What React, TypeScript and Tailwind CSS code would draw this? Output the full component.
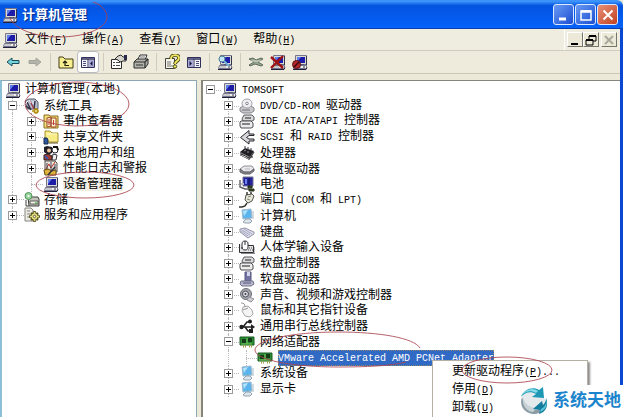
import type { ReactNode } from 'react';
import clsx from 'clsx';

function Svg({ children, className }: { children: ReactNode; className?: string }) {
  return (
    <svg
      viewBox="0 0 16 16"
      className={clsx('size-4 shrink-0', className)}
      fill="none"
      aria-hidden="true"
    >
      {children}
    </svg>
  );
}

function PcShape() {
  return (
    <>
      <path d="M3.5 1.500h11v9h-11z" fill="#dcdcd4" stroke="#74748c" />
      <path d="M5 3h8v6H5z" fill="#1c1ca8" />
      <path d="M5 3h4L5 8z" fill="#6080ec" />
      <path d="M14.500 2v9" stroke="#34344c" />
      <path d="M7 10.500h5v1H7z" fill="#34344c" />
      <path d="M2.500 11.500h12v2l-1 1h-12z" fill="#f0f0e8" stroke="#74748c" />
      <path d="M3 13h6" stroke="#a4a4b0" />
      <path d="M11 13h2" stroke="#34344c" />
      <path d="M1 15.500h13l1-2" stroke="#20203c" />
    </>
  );
}

const PcIcon = () => (
  <Svg>
    <PcShape />
  </Svg>
);

const ToolsIcon = () => (
  <Svg>
    <path d="M1 3l4-2h6l3 3v7H3z" fill="#b4bcd0" stroke="#5c5c68" />
    <path d="M3 4l4 8M11 3l-1 8M2 8l4 3" stroke="#303040" strokeWidth="1.4" />
    <path d="M6 3l4 8" stroke="#a43c44" strokeWidth="1.4" />
    <path d="M1 6l3-3M5 2l2 3M9 3v3" stroke="#f4f4f4" />
    <path d="M8 13h7M12 10v6M10 11l4 4M14 11l-4 4" stroke="#b08c10" strokeWidth="1.500" />
    <circle cx="12" cy="13" r="1" fill="#f4e890" />
  </Svg>
);

const EventIcon = () => (
  <Svg>
    <path d="M1 2h5l1 1h8v12H1z" fill="#f0dc78" stroke="#8c6c20" />
    <path d="M4 5l4-1v9l-4 1zM8 5h5v9H8z" fill="#fff4d0" stroke="#9c4424" />
    <path d="M6 6v6M10.500 7v5" stroke="#c43c2c" />
  </Svg>
);

const SharedFolderIcon = () => (
  <Svg>
    <path d="M2 2h5l2 2h6v9H2z" fill="#f8ec88" stroke="#a89028" />
    <path d="M4 5h10" stroke="#fffccc" />
    <path d="M1 9h3l1 2v4H1z" fill="#2c58a4" stroke="#14284c" />
    <path d="M6 14h9" stroke="#5c5020" />
  </Svg>
);

const UsersIcon = () => (
  <Svg>
    <path d="M1 2l3-1 5 1v6l-4 2-4-3z" fill="#20202c" />
    <circle cx="6" cy="5.500" r="2" fill="#f0c49c" />
    <path d="M1 10l4-1 4 2v4H1z" fill="#a43c34" stroke="#30201c" />
    <path d="M2 11l3 3" stroke="#3c54ac" strokeWidth="2" />
    <circle cx="12" cy="5" r="3" fill="#fff" stroke="#20202c" />
    <path d="M10 2h4l1 3" stroke="#111" strokeWidth="2" />
    <path d="M10 9l4 1-1 5H9z" fill="#f4f4f4" stroke="#33333c" />
  </Svg>
);

const PerfIcon = () => (
  <Svg>
    <path d="M2 1h10l2 2v9H2z" fill="#ece8dc" stroke="#55504c" />
    <path d="M3 9l3-5 2 4 4-6" stroke="#c42c24" />
    <path d="M4 3v7M8 2v9M12 4v7" stroke="#44445c" />
    <path d="M1 10l4-1 4 2 4-1v5H2z" fill="#e0b43c" stroke="#6c4c14" />
    <path d="M5 15l7-8" stroke="#30303c" strokeWidth="1.500" />
  </Svg>
);

const StorageIcon = () => (
  <Svg>
    <path d="M4 5h10l1 2v7H5z" fill="#c4c4bc" stroke="#40403c" />
    <path d="M6 9h8v3H6z" fill="#f4f4ec" stroke="#5c5c54" />
    <path d="M11 11h2" stroke="#20a020" />
    <circle cx="4.500" cy="4" r="3.500" fill="#9cd4a0" stroke="#4c9458" />
    <circle cx="4.500" cy="4" r="1" fill="#fff" />
    <path d="M2 8v6h3" stroke="#40403c" />
  </Svg>
);

const ServicesIcon = () => (
  <Svg>
    <path d="M1 1h6l2 2v11H1z" fill="#ecece4" stroke="#84847c" />
    <path d="M3 4h3M3 7h3M3 10h3" stroke="#84847c" />
    <path d="M10.500 4v11M5 9.500h11M7 6l7 7M14 6l-7 7" stroke="#5c5820" strokeWidth="2.600" />
    <path d="M10.500 5v9M6 9.500h9" stroke="#e0d878" strokeWidth="1.200" />
    <circle cx="10.500" cy="9.500" r="3" fill="#ece484" />
    <circle cx="10.500" cy="9.500" r="1.200" fill="#fff" stroke="#5c5820" />
  </Svg>
);

const DiscIcon = () => (
  <Svg>
    <path d="M1 10l3-2h8l3 2v3l-3 2H4l-3-2z" fill="#c8c8cc" stroke="#84848c" />
    <ellipse cx="8" cy="5.500" rx="5" ry="4.500" fill="#f0f0f4" stroke="#a0a0a8" />
    <circle cx="8" cy="5.500" r="1.300" fill="#fff" stroke="#84848c" />
    <path d="M3 12h8" stroke="#707078" />
  </Svg>
);

const ControllerIcon = () => (
  <Svg>
    <path d="M5 2h8l2 2v3l-2 1H4L3 6z" fill="#d8d8d8" stroke="#5c5c60" />
    <path d="M2 8h10l2 2v4l-2 1H2l-1-2V9z" fill="#ececec" stroke="#505054" />
    <path d="M3 11h8M6 5h6" stroke="#606064" strokeWidth="1.300" />
  </Svg>
);

const ScsiIcon = () => (
  <Svg>
    <path d="M10 1.500L1.500 8.500l8.500 6.500v-3h5V10h-5L7.500 8.500 10 6.500h5V5h-5z" fill="#d8d8dc" stroke="#28282c" />
  </Svg>
);

const CpuIcon = () => (
  <Svg>
    <path d="M1 7l5-4 9 3-4 6z" fill="#202024" />
    <path
      d="M2 9l9 4 4-6M2 7v4M4 8v4M6 9v4M8 10v4M10 11v4M13 9v4"
      stroke="#38383c"
      strokeWidth="1.200"
    />
    <path d="M6 3V1M9 4V2M12 5V3" stroke="#38383c" />
    <path d="M5 6l2-1M8 7h2" stroke="#8c8c94" />
  </Svg>
);

const DiskIcon = () => (
  <Svg>
    <path d="M1 8l4-3h8l2 3-4 3H5z" fill="#e8e8ea" stroke="#909096" />
    <path d="M1 8v3l4 2h6l4-3V8l-4 3H5z" fill="#88888e" stroke="#606066" />
    <path d="M6 8h5" stroke="#b4b4bc" />
  </Svg>
);

const BatteryIcon = () => (
  <Svg>
    <path d="M4 1h10v9H4z" fill="#24249c" stroke="#70708c" />
    <path d="M6 3h2v5H6z" fill="#6c80ec" />
    <path d="M10 2v8" stroke="#10105c" />
    <path d="M1 4v7l5 2h4" stroke="#5c5c64" strokeWidth="1.400" />
    <path d="M9 10h4v2H9zM10 13h5v2h-5z" fill="#44502c" stroke="#202c14" />
    <path d="M2 8h3" stroke="#b8b8c0" strokeWidth="2" />
  </Svg>
);

const PortIcon = () => (
  <Svg>
    <path d="M7 3l6-1 2 2-2 5-4 2-3-3z" fill="#e8e8d8" stroke="#55554c" />
    <path d="M9 5l3-1M8 7l3 1" stroke="#84847c" />
    <path d="M8 3V0M12 2V0M8 11l-2 3-3 1H0" stroke="#33332c" strokeWidth="1.400" />
  </Svg>
);

const ComputerIcon = () => (
  <Svg>
    <path d="M3 2l9-1 1 9-9 1z" fill="#5cb4ec" stroke="#9cb8cc" />
    <path d="M4 3l5-1-4 6z" fill="#b4e4fc" />
    <path d="M7 11h4l2 2-2 2H6l-2-1z" fill="#dce4ec" stroke="#94a4b0" />
    <path d="M14 3v8" stroke="#a8b8c4" />
  </Svg>
);

const KeyboardIcon = () => (
  <Svg>
    <path d="M1 5l5-1 9 4v2l-6 4-8-6z" fill="#dcdcec" stroke="#9494a8" />
    <path d="M3 6l8 5M5 5l8 5M2 7l7 5" stroke="#a8a8c0" />
  </Svg>
);

const HidIcon = () => (
  <Svg>
    <path d="M.500 5v8.500h14V6.500H9" fill="#e4e4e4" stroke="#303034" />
    <path d="M3 10V5c0-2 1-3 3-3s3 1 3 3v3c0 2-1 3-3 3s-3-1-3-3M6 2v4" fill="#fff" stroke="#303034" />
    <path d="M10 9h4M9 11h5" stroke="#505054" strokeDasharray="1 1" />
    <path d="M2 14.500h14V8" stroke="#84848c" />
  </Svg>
);

const FloppyIcon = () => (
  <Svg>
    <path d="M6 1h6v9H6z" fill="#7474a4" stroke="#54547c" />
    <path d="M8 1h3v4H8z" fill="#d4d4e8" />
    <path d="M2 10h12l1 3-3 2H3l-2-2z" fill="#b8b8cc" stroke="#70708c" />
    <path d="M4 12h8" stroke="#54547c" />
  </Svg>
);

const SoundIcon = () => (
  <Svg>
    <circle cx="7" cy="7" r="5.500" fill="#a4a4ac" stroke="#70707c" />
    <circle cx="6.500" cy="7" r="3" fill="#d8d8e0" stroke="#50505c" />
    <circle cx="6.500" cy="7" r="1" fill="#404048" />
    <path d="M10 10l5 2-3 3-4-2z" fill="#d0d0d4" stroke="#909098" />
  </Svg>
);

const MouseIcon = () => (
  <Svg>
    <path d="M4 5l5-1 4 4 1 4-3 3-5-1-3-5z" fill="#f4f4f4" stroke="#a8a8a8" />
    <path d="M4 8l5-2M2 1c3 0 4 1 4 4" stroke="#989898" />
  </Svg>
);

const UsbIcon = () => (
  <Svg>
    <path d="M1 9h13M4 9l4-5h3M6 9l3 4h3" stroke="#202020" strokeWidth="1.500" />
    <circle cx="2.500" cy="9" r="2.200" fill="#202020" />
    <path d="M12 6l4 3-4 3z" fill="#202020" />
    <circle cx="11" cy="3.500" r="2" fill="#202020" />
    <path d="M10 11h4v4h-4z" fill="#202020" />
  </Svg>
);

const NicIcon = () => (
  <Svg>
    <path d="M1 3h14v8H1z" fill="#2c8c34" stroke="#185c20" />
    <path d="M3 5h4v4H3zM9 4h4v4H9z" fill="#143c18" />
    <path d="M8 4v6M2 10h11" stroke="#74c45c" />
    <path d="M4 12.500h4M10 12.500h4" stroke="#a8a03c" strokeWidth="2" strokeDasharray="1 1" />
  </Svg>
);

const BackIcon = () => (
  <Svg>
    <path d="M2 8l5-4v2.500h7v3H7V12z" fill="#74d4dc" stroke="#1c4c5c" />
  </Svg>
);

const ForwardIcon = () => (
  <Svg>
    <path d="M14 8L9 4v2.500H2v3h7V12z" fill="#b4b4ac" stroke="#a4a49c" />
  </Svg>
);

const FolderUpIcon = () => (
  <Svg>
    <path d="M1 3h4l2 2h8v9H1z" fill="#f8f090" stroke="#403c14" />
    <path d="M7 7v4.500h4M5 9l2-2 2 2" stroke="#202010" strokeWidth="1.200" />
  </Svg>
);

const PanelIcon = ({ flip }: { flip?: boolean }) => (
  <Svg className={flip ? '-scale-x-100' : undefined}>
    <path d="M1.500 3.500h13v10h-13z" fill="#f4f4fc" stroke="#30305c" />
    <path d="M2 5h12" stroke="#30305c" strokeWidth="1.500" />
    <path d="M3 7.500h3M3 9.500h3M3 11.500h3" stroke="#4c4c7c" />
    <path d="M8 5v8" stroke="#30305c" />
    <path d="M9 6h5v7H9z" fill="#ababd4" />
    <path d="M12.500 7v5L10 9.500z" fill="#18184c" />
  </Svg>
);

const PropertiesIcon = () => (
  <Svg>
    <path d="M.500 5.500h10v9H.500z" fill="#fff" stroke="#2c2c2c" />
    <path d="M2 8.500h2M5 8.500h4M2 11.500h2M5 11.500h4" stroke="#4c4c4c" />
    <path d="M4 5l3-3 3-1 2 2h3v4h-3l-3 1-2-2z" fill="#d4d4cc" stroke="#2c2c2c" />
    <path d="M13 1h3v5h-3z" fill="#28284c" />
  </Svg>
);

const PrinterIcon = () => (
  <Svg>
    <path d="M5 5l2-4h7l-2 5" fill="#fff" stroke="#2c2c2c" />
    <path d="M1 8l3-3h11v5l-3 4H1z" fill="#b4b4ac" stroke="#2c2c2c" />
    <path d="M1 8h11l3-3M12 8v6M3 11h7" stroke="#2c2c2c" strokeWidth="1.200" />
    <path d="M7 3h5" stroke="#70706c" />
  </Svg>
);

const HelpIcon = () => (
  <Svg>
    <path d="M1.500 4.500h9v10h-9z" fill="#f4f4ec" stroke="#40403c" />
    <path d="M3 8h4M3 10h4M3 12h6" stroke="#74746c" />
    <path d="M7 5c0-5 8-5 8-1 0 3-4 3-4 6" stroke="#4c4814" strokeWidth="3.500" />
    <path d="M7 5c0-5 8-5 8-1 0 3-4 3-4 6" stroke="#f0e860" strokeWidth="1.800" />
    <circle cx="11" cy="12.500" r="1.700" fill="#f0e860" stroke="#4c4814" />
  </Svg>
);

const ScanIcon = () => (
  <Svg>
    <PcShape />
    <circle cx="5" cy="5" r="3" fill="#c4e4f4" stroke="#407894" />
    <path d="M7 7l5 5" stroke="#70b4d4" strokeWidth="2" />
  </Svg>
);

const UpdateIcon = () => (
  <Svg>
    <path
      d="M1 5l4-1 3 2 5-2 2 1-5 3 5 3-2 1-6-2-5 2-1-1 5-3z"
      fill="#94a48c"
      stroke="#606c5c"
    />
    <path d="M3 7h10" stroke="#dce4d4" />
  </Svg>
);

const UninstallIcon = () => (
  <Svg>
    <PcShape />
    <path d="M1 3l12 11M13 2L1 14" stroke="#a01414" strokeWidth="2.400" />
  </Svg>
);

const DisableIcon = () => (
  <Svg>
    <PcShape />
    <circle cx="4.500" cy="10.500" r="4" fill="#b4282c" stroke="#5c1014" />
    <path d="M2 13l5-5" stroke="#38080c" strokeWidth="1.500" />
  </Svg>
);

// Han glyphs take a full cell, Latin runs take half-width cells
function Label({ children }: { children: string }) {
  return (
    <span className="whitespace-pre">
      {children.split(/([\x20-\x7e]+)/).map((part, i) =>
        i % 2 ? (
          <span key={i} className="font-['Liberation_Mono',monospace] text-[10px]">
            {part}
          </span>
        ) : (
          part
        ),
      )}
    </span>
  );
}

function Accel({ letter }: { letter: string }) {
  return (
    <span className="font-['Liberation_Mono',monospace] text-[10px]">
      (<u>{letter}</u>)
    </span>
  );
}

type Node = {
  label: string;
  icon: () => ReactNode;
  depth: number;
  state?: 'open' | 'closed';
  highlight?: 'active' | 'inactive';
  // depth columns whose guide line runs on past this row
  guides?: number[];
};

const consoleTree: Node[] = [
  { label: '计算机管理(本地)', icon: PcIcon, depth: 0 },
  { label: '系统工具', icon: ToolsIcon, depth: 1, state: 'open' },
  { label: '事件查看器', icon: EventIcon, depth: 2, state: 'closed', guides: [0] },
  { label: '共享文件夹', icon: SharedFolderIcon, depth: 2, state: 'closed', guides: [0] },
  { label: '本地用户和组', icon: UsersIcon, depth: 2, state: 'closed', guides: [0] },
  { label: '性能日志和警报', icon: PerfIcon, depth: 2, state: 'closed', guides: [0] },
  { label: '设备管理器', icon: PcIcon, depth: 2, highlight: 'inactive', guides: [0] },
  { label: '存储', icon: StorageIcon, depth: 1, state: 'closed' },
  { label: '服务和应用程序', icon: ServicesIcon, depth: 1, state: 'closed' },
];

const deviceTree: Node[] = [
  { label: 'TOMSOFT', icon: PcIcon, depth: 1, state: 'open' },
  { label: 'DVD/CD-ROM 驱动器', icon: DiscIcon, depth: 2, state: 'closed' },
  { label: 'IDE ATA/ATAPI 控制器', icon: ControllerIcon, depth: 2, state: 'closed' },
  { label: 'SCSI 和 RAID 控制器', icon: ScsiIcon, depth: 2, state: 'closed' },
  { label: '处理器', icon: CpuIcon, depth: 2, state: 'closed' },
  { label: '磁盘驱动器', icon: DiskIcon, depth: 2, state: 'closed' },
  { label: '电池', icon: BatteryIcon, depth: 2, state: 'closed' },
  { label: '端口 (COM 和 LPT)', icon: PortIcon, depth: 2, state: 'closed' },
  { label: '计算机', icon: ComputerIcon, depth: 2, state: 'closed' },
  { label: '键盘', icon: KeyboardIcon, depth: 2, state: 'closed' },
  { label: '人体学输入设备', icon: HidIcon, depth: 2, state: 'closed' },
  { label: '软盘控制器', icon: ControllerIcon, depth: 2, state: 'closed' },
  { label: '软盘驱动器', icon: FloppyIcon, depth: 2, state: 'closed' },
  { label: '声音、视频和游戏控制器', icon: SoundIcon, depth: 2, state: 'closed' },
  { label: '鼠标和其它指针设备', icon: MouseIcon, depth: 2, state: 'closed' },
  { label: '通用串行总线控制器', icon: UsbIcon, depth: 2, state: 'closed' },
  { label: '网络适配器', icon: NicIcon, depth: 2, state: 'open' },
  {
    label: 'VMware Accelerated AMD PCNet Adapter',
    icon: NicIcon,
    depth: 3,
    highlight: 'active',
    guides: [1],
  },
  { label: '系统设备', icon: ComputerIcon, depth: 2, state: 'closed' },
  { label: '显示卡', icon: ComputerIcon, depth: 2, state: 'closed' },
];

function TreeRow({ node, cell, gap }: { node: Node; cell: string; gap: string }) {
  const { label, icon: Icon, depth, state, highlight, guides = [] } = node;
  return (
    <li className="flex min-h-0 items-center">
      {Array.from({ length: depth }, (_, i) => {
        const own = i === depth - 1;
        const first = label === 'TOMSOFT';
        return (
          <span
            key={i}
            className={clsx('relative flex h-full shrink-0 items-center pl-[3px]', cell)}
          >
            {(own || guides.includes(i)) && !first && (
              <span className="absolute inset-y-0 left-[7px] border-l border-dotted border-[#b8b8b8]" />
            )}
            {own && (
              <span className="absolute top-1/2 right-0 left-[7px] border-t border-dotted border-[#b8b8b8]" />
            )}
            {own && state && (
              <button
                type="button"
                aria-label={`${state === 'open' ? '折叠' : '展开'} ${label}`}
                className="relative flex size-[9px] items-center justify-center border border-[#9a9a9a] bg-white"
              >
                <span className="absolute h-px w-[5px] bg-black" />
                {state === 'closed' && <span className="absolute h-[5px] w-px bg-black" />}
              </button>
            )}
          </span>
        );
      })}
      <Icon />
      <span
        className={clsx(
          gap,
          highlight === 'active' &&
            'bg-[#316ac5] leading-[14px] text-white outline outline-dotted outline-[#8c8468] -outline-offset-1',
          highlight === 'inactive' && 'bg-[#f1eee6] leading-[14px]',
        )}
      >
        <Label>{label}</Label>
      </span>
    </li>
  );
}

function Divider() {
  return <span className="mx-1 h-[18px] w-px shrink-0 bg-[#cfccbb]" />;
}

function ToolButton({
  name,
  pressed,
  disabled,
  children,
}: {
  name: string;
  pressed?: boolean;
  disabled?: boolean;
  children: ReactNode;
}) {
  return (
    <button
      type="button"
      aria-label={name}
      disabled={disabled}
      className={clsx(
        'flex h-[22px] w-[22px] shrink-0 items-center justify-center',
        pressed && 'rounded-[3px] border border-[#b9bcc4] bg-[#fdfdfb]',
      )}
    >
      {children}
    </button>
  );
}

const captionButton =
  'flex size-[21px] items-center justify-center rounded-[3px] border border-[#dce8fc] bg-linear-to-br';
const childButton =
  'flex h-[15px] w-4 items-center justify-center border border-t-white border-l-white border-r-[#77756a] border-b-[#77756a] bg-[#ece9d8]';

function TitleBar() {
  return (
    <header className="flex h-[29px] shrink-0 items-center rounded-tr-md border-b border-[#0a3fae] bg-linear-to-b from-[#3c94fb] from-5% via-[#0453e0] via-20% to-[#0562fa] pt-px pr-[5px] pl-[2px]">
      <PcIcon />
      <h1 className="ml-1 flex-1 text-[13px] font-bold text-white [text-shadow:1px_1px_1px_#0a2a80]">
        计算机管理
      </h1>
      <div className="flex gap-px">
        <button
          type="button"
          aria-label="最小化"
          className={clsx(captionButton, 'from-[#6a9af4] to-[#1c4cd0]')}
        >
          <Svg>
            <path d="M3 12h7" stroke="#fff" strokeWidth="3" />
          </Svg>
        </button>
        <button
          type="button"
          aria-label="最大化"
          className={clsx(captionButton, 'from-[#6a9af4] to-[#1c4cd0]')}
        >
          <Svg>
            <path d="M3 4h10v9H3z" stroke="#fff" strokeWidth="1.500" />
            <path d="M3 4.500h10" stroke="#fff" strokeWidth="2.500" />
          </Svg>
        </button>
        <button
          type="button"
          aria-label="关闭"
          className={clsx(captionButton, 'from-[#e89078] to-[#c0401c]')}
        >
          <Svg>
            <path d="M3.500 3.500l9 9M12.500 3.500l-9 9" stroke="#fff" strokeWidth="2" />
          </Svg>
        </button>
      </div>
    </header>
  );
}

const menus = [
  ['文件', 'F'],
  ['操作', 'A'],
  ['查看', 'V'],
  ['窗口', 'W'],
  ['帮助', 'H'],
];

function MenuBar() {
  return (
    <nav className="flex h-[22px] shrink-0 items-center border-b border-[#d0cdbf] bg-[#efede0] pr-[3px] pl-[2px]">
      <PcIcon />
      <div className="ml-[7px] flex flex-1 gap-[15px]">
        {menus.map(([text, key]) => (
          <button key={key} type="button" className="whitespace-nowrap">
            {text}
            <Accel letter={key} />
          </button>
        ))}
      </div>
      <div className="flex h-full items-center border-l border-white pl-[2px]">
        <button type="button" aria-label="最小化子窗口" className={childButton}>
          <Svg>
            <path d="M4 12h7" stroke="#000" strokeWidth="2" />
          </Svg>
        </button>
        <button type="button" aria-label="还原子窗口" className={childButton}>
          <Svg>
            <path d="M6 7V4h7v5h-3" stroke="#000" />
            <path d="M6 4h7M3 8h7" stroke="#000" strokeWidth="2" />
            <path d="M3 8h7v5H3z" stroke="#000" />
          </Svg>
        </button>
        <button type="button" aria-label="关闭子窗口" className={clsx(childButton, 'ml-[2px]')}>
          <Svg>
            <path d="M4 4l8 8M12 4l-8 8" stroke="#aaa89c" strokeWidth="2" />
          </Svg>
        </button>
      </div>
    </nav>
  );
}

function ToolBar() {
  return (
    <div
      role="toolbar"
      className="flex h-[23px] shrink-0 items-center border-b border-[#cbc8b8] bg-[#eeebdc] pl-[2px]"
    >
      <ToolButton name="后退">
        <BackIcon />
      </ToolButton>
      <ToolButton name="前进" disabled>
        <ForwardIcon />
      </ToolButton>
      <Divider />
      <ToolButton name="上一级">
        <FolderUpIcon />
      </ToolButton>
      <ToolButton name="显示/隐藏控制台树" pressed>
        <PanelIcon />
      </ToolButton>
      <Divider />
      <ToolButton name="属性">
        <PropertiesIcon />
      </ToolButton>
      <ToolButton name="打印">
        <PrinterIcon />
      </ToolButton>
      <Divider />
      <ToolButton name="帮助">
        <HelpIcon />
      </ToolButton>
      <ToolButton name="显示/隐藏操作窗格">
        <PanelIcon flip />
      </ToolButton>
      <Divider />
      <ToolButton name="扫描检测硬件改动">
        <ScanIcon />
      </ToolButton>
      <Divider />
      <ToolButton name="更新驱动程序">
        <UpdateIcon />
      </ToolButton>
      <ToolButton name="卸载">
        <UninstallIcon />
      </ToolButton>
      <ToolButton name="停用">
        <DisableIcon />
      </ToolButton>
    </div>
  );
}

function ContextMenu() {
  return (
    <div
      role="menu"
      className="absolute top-[360px] left-[432px] flex w-[156px] flex-col border border-[#b4b1a4] bg-white pt-[2px] pl-[19px] shadow-[2px_2px_2px_#8c8c8c]"
    >
      <button type="button" role="menuitem" className="h-[18px] text-left">
        更新驱动程序
        <Accel letter="P" />
        <Label>...</Label>
      </button>
      <button type="button" role="menuitem" className="h-[18px] text-left">
        停用
        <Accel letter="D" />
      </button>
      <button type="button" role="menuitem" className="h-[18px] text-left">
        卸载
        <Accel letter="U" />
      </button>
    </div>
  );
}

function SiteMark() {
  return (
    <div className="absolute top-[385px] left-[516px] flex h-8 w-[107px] items-center gap-1 bg-white pl-[3px]">
      <svg viewBox="0 0 30 30" className="size-[30px] shrink-0" fill="none" aria-hidden="true">
        <circle cx="14" cy="16" r="12" fill="#e4eaec" />
        <path d="M3 11c-3 8 2 16 11 17 5 0 9-2 11-5-5 2-10 1-14-2-4-2-7-6-8-10z" fill="#8c9ca4" />
        <path d="M4 12c2 6 7 10 14 10l-4 4C7 25 3 19 4 12z" fill="#c8d2d6" />
        <path d="M2 11C5 3 14 0 20 4l4-3 1 11-12-1 4-3c-5-3-11-2-15 3z" fill="#1c98b4" />
        <path d="M3 9C7 3 14 1 19 5l-2 2C12 4 7 5 3 9z" fill="#84dce8" />
        <path d="M27 12c3 7 0 14-7 16l1-4-7-1 9-8 1 4c2-2 3-4 3-7z" fill="#147c9c" />
        <path d="M27 12c1 5-1 9-5 11l-1 3c6-2 8-8 6-14z" fill="#58c8d8" />
      </svg>
      <span className="text-[17px] font-bold whitespace-nowrap text-[#1c84cc]">系统天地</span>
    </div>
  );
}

// Hand-drawn red rings around the steps to follow
function Rings() {
  return (
    <svg
      className="pointer-events-none absolute top-0 left-0 h-[417px] w-[623px]"
      fill="none"
      stroke="#ac4450"
      strokeOpacity="0.85"
      aria-hidden="true"
    >
      <path d="M10 18c6 12 26 19 49 19 27 0 48-9 48-20 0-6-5-12-14-15" />
      <ellipse cx="77" cy="104" rx="52" ry="22" />
      <ellipse cx="85" cy="185" rx="49" ry="13" />
      <path d="M420 348c-6-10-40-16-82-16-46 0-83 8-83 18s37 17 83 17c28 0 52-1 68-5" />
      <ellipse cx="507" cy="370" rx="45" ry="13" />
    </svg>
  );
}

export default function App() {
  return (
    <div className="relative flex min-h-screen flex-col overflow-hidden bg-[#ece9d8] font-['Liberation_Sans','Noto_Sans_CJK_SC',sans-serif] text-xs leading-4 text-black">
      <TitleBar />
      <div className="flex flex-1 flex-col border-r-[3px] border-[#0a48d4]">
        <MenuBar />
        <ToolBar />
        <main className="mt-[6px] flex flex-1 gap-1">
          <section className="w-[197px] shrink-0 border-t border-r border-l-2 border-[#8ea6b4] border-l-[#8cc0d8] bg-white pt-px pl-[3px]">
            <ul className="grid h-[141px] auto-rows-fr">
              {consoleTree.map((node) => (
                <TreeRow key={node.label} node={node} cell="w-[19px]" gap="ml-1" />
              ))}
            </ul>
          </section>
          <section className="min-w-0 flex-1 border-t border-l-2 border-[#85857c] bg-white pt-px">
            <ul className="grid h-[315px] auto-rows-fr">
              {deviceTree.map((node) => (
                <TreeRow key={node.label} node={node} cell="w-[18px]" gap="ml-[5px]" />
              ))}
            </ul>
          </section>
        </main>
      </div>
      <ContextMenu />
      <SiteMark />
      <Rings />
    </div>
  );
}
